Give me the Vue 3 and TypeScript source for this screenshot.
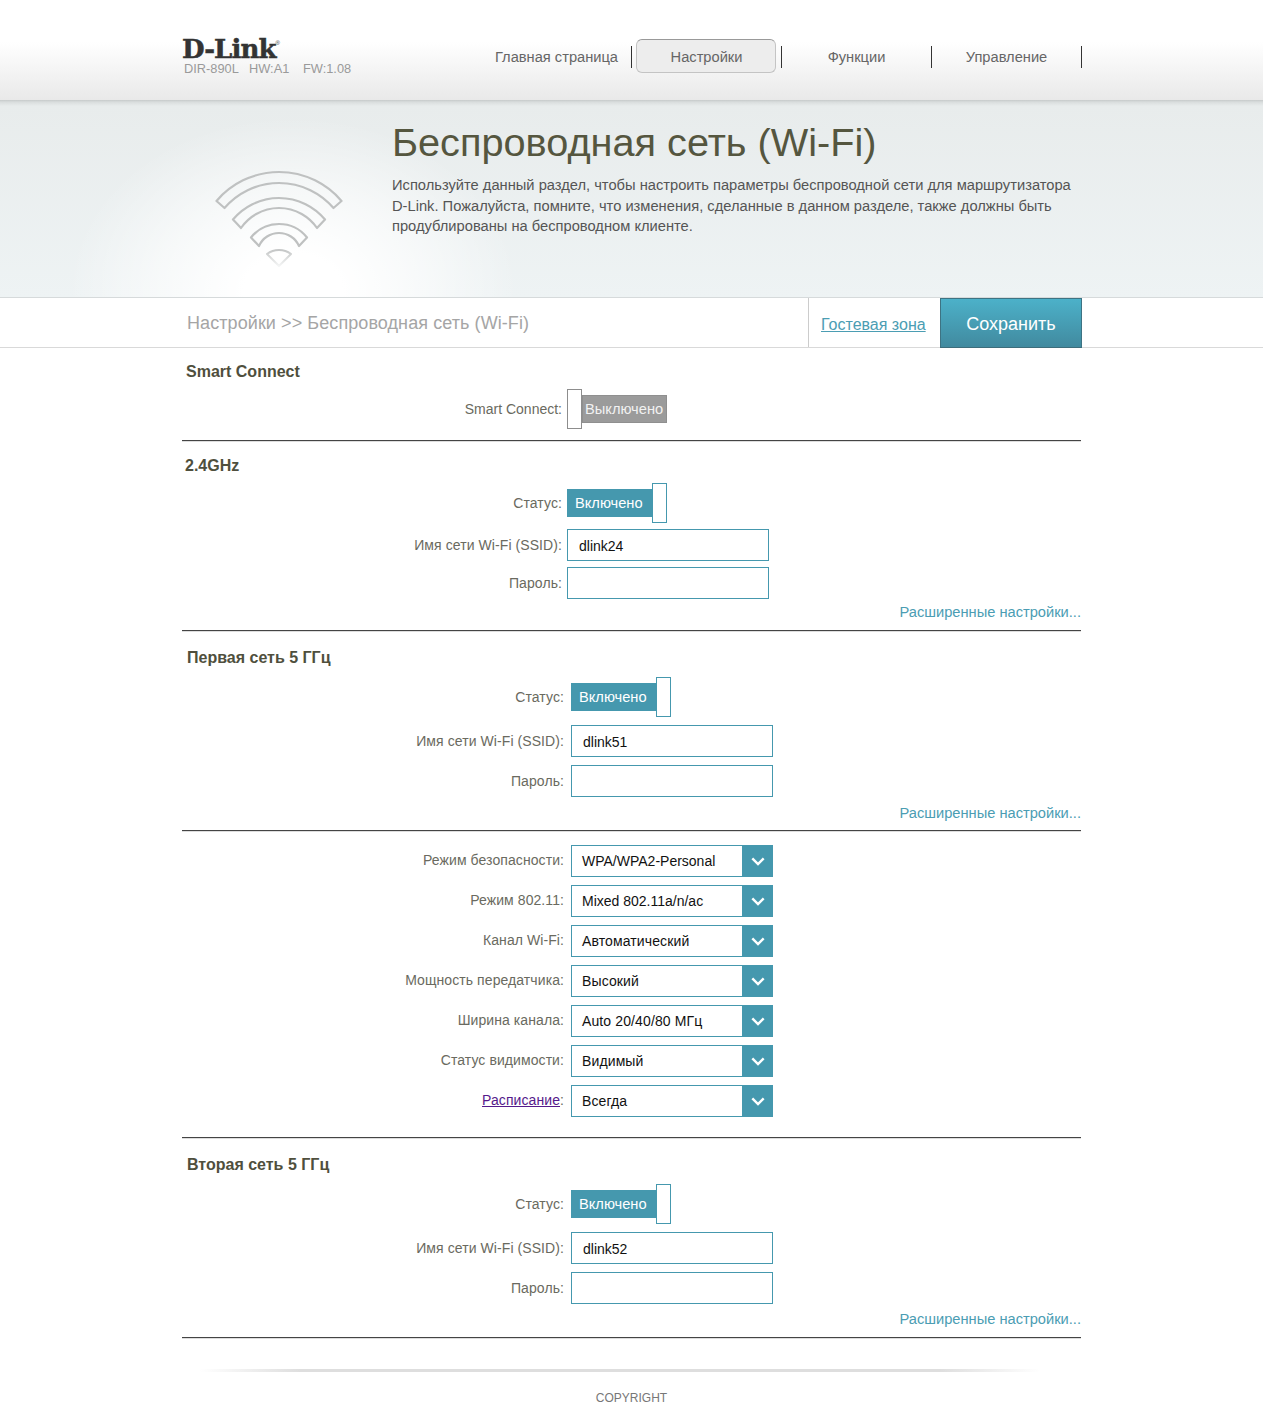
<script setup lang="ts">
const nav = [
  { label: 'Главная страница', active: false },
  { label: 'Настройки', active: true },
  { label: 'Функции', active: false },
  { label: 'Управление', active: false },
]

const selects = [
  { label: 'Режим безопасности:', value: 'WPA/WPA2-Personal', link: false },
  { label: 'Режим 802.11:', value: 'Mixed 802.11a/n/ac', link: false },
  { label: 'Канал Wi-Fi:', value: 'Автоматический', link: false },
  { label: 'Мощность передатчика:', value: 'Высокий', link: false },
  { label: 'Ширина канала:', value: 'Auto 20/40/80 МГц', link: false },
  { label: 'Статус видимости:', value: 'Видимый', link: false },
  { label: 'Расписание', value: 'Всегда', link: true },
]

const networks = [
  { key: 'second', title: 'Вторая сеть 5 ГГц', ssid: 'dlink52' },
]

function isCyrillic(text: string): boolean {
  return /[а-яё]/i.test(text)
}

function band(h1: number, y1: number, top1: number, h2: number, y2: number, top2: number): string {
  const s1 = y1 - top1
  const s2 = y2 - top2
  const r1 = (h1 * h1 + s1 * s1) / (2 * s1)
  const r2 = (h2 * h2 + s2 * s2) / (2 * s2)
  return `M${-h1} ${-y1}A${r1} ${r1} 0 0 1 ${h1} ${-y1}L${h2} ${-y2}A${r2} ${r2} 0 0 0 ${-h2} ${-y2}Z`
}

const bands = [
  band(62.5, 65, 94, 54.5, 58, 83),
  band(46, 46.5, 68, 38, 38, 58),
  band(28, 28.5, 42, 20, 20, 33),
]
</script>

<template>
  <div class="page">
    <header class="header">
      <div class="wrap header-in">
        <div class="brand">
          <div class="logo">D-Link<sup class="reg">®</sup></div>
          <div class="fw"><span>DIR-890L</span><span>HW:A1</span><span>FW:1.08</span></div>
        </div>
        <nav class="nav">
          <div v-for="item in nav" :key="item.label" class="nav-item">
            <div class="nav-label" :class="{ active: item.active }">{{ item.label }}</div>
            <div class="nav-sep"></div>
          </div>
        </nav>
      </div>
    </header>

    <section class="banner">
      <div class="wrap banner-in">
        <div class="wifi">
          <svg width="160" height="120" viewBox="-80 -100 160 120">
            <defs>
              <linearGradient id="fade" x1="0" y1="0" x2="0" y2="1">
                <stop offset="0" stop-color="#c4c6c6" />
                <stop offset="1" stop-color="#f4f5f5" />
              </linearGradient>
            </defs>
            <path v-for="d in bands" :key="d" :d="d" class="band" />
            <path d="M-12 -12A20 20 0 0 1 12 -12L0 0Z" class="wedge" stroke="url(#fade)" />
          </svg>
        </div>
        <div class="intro">
          <h1>Беспроводная сеть (Wi-Fi)</h1>
          <p>Используйте данный раздел, чтобы настроить параметры беспроводной сети для маршрутизатора D-Link. Пожалуйста, помните, что изменения, сделанные в данном разделе, также должны быть продублированы на беспроводном клиенте.</p>
        </div>
      </div>
    </section>

    <div class="bar">
      <div class="wrap bar-in">
        <div class="crumb">Настройки &gt;&gt; Беспроводная сеть (Wi-Fi)</div>
        <div class="guest"><a href="#">Гостевая зона</a></div>
        <button class="save" type="button">Сохранить</button>
      </div>
    </div>

    <main class="wrap form">
      <section class="block b-smart">
        <h2 class="t-smart">Smart Connect</h2>
        <div class="row r-toggle">
          <label class="lab latin">Smart Connect:</label>
          <div class="toggle off"><span class="knob"></span><span class="pill">Выключено</span></div>
        </div>
      </section>

      <section class="block b-24">
        <h2 class="t-24">2.4GHz</h2>
        <div class="row r-toggle">
          <label class="lab">Статус:</label>
          <div class="toggle on"><span class="pill">Включено</span><span class="knob"></span></div>
        </div>
        <div class="row r-tight">
          <label class="lab">Имя сети Wi-Fi (SSID):</label>
          <div class="field">dlink24</div>
        </div>
        <div class="row r-tight">
          <label class="lab">Пароль:</label>
          <div class="field"></div>
        </div>
        <a class="more m-24" href="#">Расширенные настройки...</a>
      </section>

      <section class="block b-first shift">
        <h2 class="t-5">Первая сеть 5 ГГц</h2>
        <div class="row r-toggle2">
          <label class="lab">Статус:</label>
          <div class="toggle on"><span class="pill">Включено</span><span class="knob"></span></div>
        </div>
        <div class="row r-wide">
          <label class="lab">Имя сети Wi-Fi (SSID):</label>
          <div class="field">dlink51</div>
        </div>
        <div class="row r-wide">
          <label class="lab">Пароль:</label>
          <div class="field"></div>
        </div>
        <a class="more m-first" href="#">Расширенные настройки...</a>
      </section>

      <section class="block b-selects shift">
        <div v-for="s in selects" :key="s.value" class="row r-wide">
          <label class="lab sel-lab"><template v-if="s.link"><a class="visited" href="#">{{ s.label }}</a>:</template><template v-else>{{ s.label }}</template></label>
          <div class="select">
            <span class="sel-value" :class="{ cyr: isCyrillic(s.value) }">{{ s.value }}</span>
            <span class="sel-arrow">
              <svg width="14" height="9" viewBox="0 0 14 9"><path d="M1.3 1.3 7 7l5.7-5.7" /></svg>
            </span>
          </div>
        </div>
      </section>

      <section v-for="n in networks" :key="n.key" class="block b-second shift">
        <h2 class="t-5">{{ n.title }}</h2>
        <div class="row r-toggle2">
          <label class="lab">Статус:</label>
          <div class="toggle on"><span class="pill">Включено</span><span class="knob"></span></div>
        </div>
        <div class="row r-wide">
          <label class="lab">Имя сети Wi-Fi (SSID):</label>
          <div class="field">{{ n.ssid }}</div>
        </div>
        <div class="row r-wide">
          <label class="lab">Пароль:</label>
          <div class="field"></div>
        </div>
        <a class="more m-second" href="#">Расширенные настройки...</a>
      </section>
    </main>

    <footer class="footer">
      <div class="foot-line"></div>
      <div class="copy">COPYRIGHT</div>
    </footer>
  </div>
</template>

<style>
html, body { margin: 0; background: #fff; }
</style>

<style scoped>
.page {
  height: 1426px;
  overflow: hidden;
  font-family: "Liberation Sans", Arial, sans-serif;
  font-size: 14px;
  color: #666;
  background: #fff;
}
.wrap { width: 900px; margin-left: 182px; }
.form { width: 899px; }

/* header */
.header {
  height: 100px;
  background: linear-gradient(#fff 0, #fff 42px, #e9e9e9 100%);
}
.header-in { display: flex; height: 100px; position: relative; }
.brand { width: 300px; padding-top: 36px; box-sizing: border-box; }
.logo {
  font-family: "DejaVu Serif", "Liberation Serif", serif;
  font-weight: 700;
  font-size: 26px;
  line-height: 26px;
  letter-spacing: -0.9px;
  color: #333;
  height: 26px;
  -webkit-text-stroke: 0.5px #333;
}
.reg { font-size: 6px; line-height: 0; -webkit-text-stroke: 0; letter-spacing: 0; vertical-align: 13px; font-family: "Liberation Sans", sans-serif; font-weight: 400; }
.fw { font-size: 12.8px; line-height: 14px; color: #9a9a9a; padding-left: 2px; display: flex; }
.fw span:nth-child(1) { width: 65px; }
.fw span:nth-child(2) { width: 54px; }
.nav { display: flex; position: absolute; left: 300px; top: 39px; font-size: 14.67px; }
.nav-item { width: 150px; height: 34px; display: flex; align-items: center; }
.nav-label {
  width: 149px;
  height: 34px;
  line-height: 36px;
  text-align: center;
  color: #666;
  box-sizing: border-box;
}
.nav-label.active {
  width: 140px;
  margin: 0 5px 0 4px;
  padding-left: 1px;
  line-height: 34px;
  background: #ededed;
  border: 1px solid #c4c4c4;
  border-top-color: #999;
  border-radius: 6px;
}
.nav-sep { width: 1px; height: 22px; background: #333; margin-top: 2px; }

/* banner */
.banner {
  height: 198px;
  box-sizing: border-box;
  border-bottom: 1px solid #d6dadb;
  background:
    radial-gradient(ellipse 225px 175px at 293px 192px, #fff 0, #fff 22%, rgba(255,255,255,.55) 60%, rgba(255,255,255,0) 100%),
    linear-gradient(#c6caca 0, #d9dddd 2px, #e8ecec 6px, #eef3f4 100%);
}
.banner-in { display: flex; }
.wifi { width: 210px; flex: none; padding-top: 66px; box-sizing: border-box; }
.wifi svg { display: block; margin-left: 17px; }
.band { fill: none; stroke: #bfc1c1; stroke-width: 2.2; stroke-linejoin: round; }
.wedge { fill: none; stroke-width: 2; stroke-linejoin: round; }
.intro { flex: none; width: 690px; }
.intro h1 {
  margin: 19px 0 0;
  font-size: 39.7px;
  font-weight: 400;
  line-height: 46px;
  color: #55563f;
}
.intro p {
  margin: 10px 0 0;
  font-size: 14.7px;
  line-height: 20.5px;
  color: #555;
}

/* action bar */
.bar { height: 50px; border-bottom: 1px solid #d9d9d9; box-sizing: border-box; }
.bar-in { display: flex; height: 50px; }
.crumb { width: 626px; padding: 15px 0 0 5px; box-sizing: border-box; font-size: 18px; letter-spacing: .08px; line-height: 20px; color: #a5a5a5; }
.guest {
  width: 132px;
  height: 49px;
  box-sizing: border-box;
  border-left: 1px solid #ccc;
  padding: 18px 0 0 12px;
  font-size: 16px;
  line-height: 18px;
}
.guest a { color: #4b9db3; }
.save {
  width: 142px;
  height: 50px;
  border: 1px solid #3d7383;
  border-bottom-color: #3d6d7b;
  background: linear-gradient(#4cb1c9, #418a9f);
  color: #fff;
  font-family: inherit;
  font-size: 18px;
  padding: 2px 0 0;
}

/* form */
.block { border-bottom: 1px solid #444; box-shadow: 0 1px 0 #ddd; position: relative; }
h2 {
  margin: 0;
  height: 18px;
  font-size: 16px;
  line-height: 20px;
  font-weight: 700;
  color: #4f4f3d;
}
.t-smart { padding: 14px 0 0 4px; box-sizing: content-box; }
.t-24 { padding: 15px 0 0 3px; box-sizing: content-box; }
.t-5 { padding: 17px 0 0 5px; box-sizing: content-box; }
.row { display: flex; align-items: center; }
.lab { width: 380px; margin-right: 5px; text-align: right; color: #6a6a60; letter-spacing: .08px; }
.lab.latin { letter-spacing: 0; }
.shift .lab { width: 382px; margin-right: 7px; }
.sel-lab { margin-top: -2px; }
.r-toggle { margin-top: 9px; }
.r-toggle2 { margin-top: 11px; }
.r-tight { margin-top: 6px; }
.r-wide { margin-top: 8px; }
.b-smart { padding-bottom: 11px; }
.toggle { display: flex; align-items: center; height: 40px; width: 100px; box-sizing: border-box; font-size: 14.67px; }
.knob {
  display: block;
  width: 15px;
  height: 40px;
  box-sizing: border-box;
  background: #fff;
  border: 1px solid;
  flex: none;
}
.pill { display: block; height: 28px; line-height: 28px; color: #fff; box-sizing: border-box; flex: none; }
.on .pill { width: 86px; background: #4598ae; padding-left: 8px; }
.on .knob { border-color: #4598ae; margin-left: -1px; }
.off .pill { width: 85px; background: #9b9b9b; padding-left: 2px; border: 1px solid #8f8f8f; line-height: 26px; color: #f2f2f2; }
.off .knob { border-color: #8d8d8d; }
.field {
  width: 202px;
  height: 32px;
  box-sizing: border-box;
  border: 1px solid #4598ae;
  padding-left: 11px;
  line-height: 32px;
  color: #111;
  background: #fff;
}
.more {
  display: block;
  text-align: right;
  font-size: 14.67px;
  line-height: 18px;
  color: #4b9db3;
  text-decoration: none;
}
.m-24 { margin-top: 4px; padding-bottom: 9px; }
.m-first { margin-top: 7px; padding-bottom: 8px; }
.m-second { margin-top: 6px; padding-bottom: 9px; }
.b-selects { padding-top: 6px; padding-bottom: 20px; }
.select { width: 202px; height: 32px; box-sizing: border-box; border: 1px solid #4598ae; display: flex; background: #fff; }
.sel-value { flex: 1; padding-left: 10px; line-height: 30px; color: #111; }
.sel-value.cyr { letter-spacing: .12px; }
.sel-arrow { width: 31px; margin: -1px -1px -1px 0; background: #4598ae; display: flex; align-items: center; justify-content: center; padding-top: 1px; box-sizing: border-box; }
.sel-arrow path { fill: none; stroke: #fff; stroke-width: 2.4; }
.visited { color: #551a8b; }

/* footer */
.footer { height: 88px; position: relative; }
.foot-line {
  width: 840px;
  height: 3px;
  margin: 31px 0 0 200px;
  background: linear-gradient(90deg, rgba(220,220,220,0), #dedede 12%, #dedede 88%, rgba(220,220,220,0));
}
.copy { margin-top: 19px; text-align: center; font-size: 12px; line-height: 14px; color: #777; }
</style>
